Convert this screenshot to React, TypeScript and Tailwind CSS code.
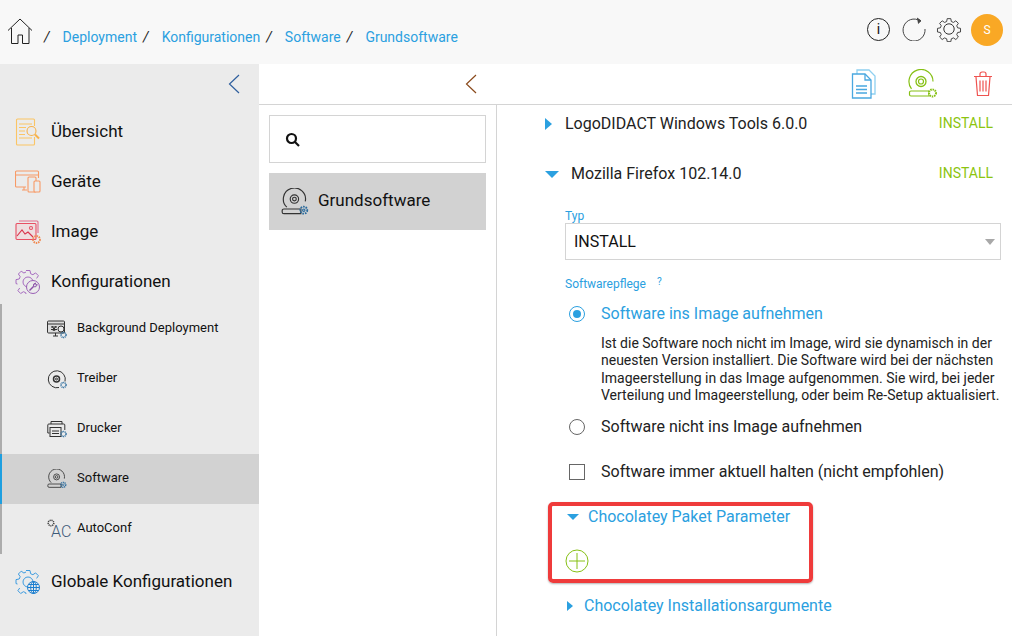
import { ReactNode } from "react";

// small outline drawings, one per menu entry
function Disc({ color = "#333", gear = "#2b6c9e", size = 24 }: { color?: string; gear?: string; size?: number }) {
  return (
    <svg width={size} height={size} viewBox="0 0 24 24" fill="none" stroke={color} strokeWidth="1">
      <path d="M5 16.400A9.500 9.500 0 1 1 20.800 11.500" />
      <circle cx="11.500" cy="9.500" r="3.600" />
      <circle cx="11.500" cy="9.500" r="1.600" />
      <path d="M2.500 18h14.500v4H2.500a1.500 1.500 0 0 1-1.500-1.500v-1A1.500 1.500 0 0 1 2.500 18z" />
      <circle cx="19.500" cy="19" r="3" stroke={gear} strokeWidth="1.600" strokeDasharray="1.400 0.800" />
      <circle cx="19.500" cy="19" r="1" stroke={gear} />
    </svg>
  );
}

function Gear({ color = "#333", size = 26 }: { color?: string; size?: number }) {
  return (
    <svg width={size} height={size} viewBox="0 0 26 26" fill="none" stroke={color} strokeWidth="1">
      <path d="M11 1.500h4l.6 3.200 2.300 1 2.700-1.800 2.800 2.800-1.800 2.700 1 2.300 3.200.6v4l-3.200.6-1 2.300 1.800 2.700-2.800 2.800-2.700-1.800-2.300 1-.6 3.200h-4l-.6-3.200-2.300-1-2.700 1.800-2.800-2.800 1.800-2.700-1-2.300-3.200-.6v-4l3.200-.6 1-2.300-1.800-2.700 2.800-2.800 2.700 1.800 2.300-1z" transform="translate(1.300 1.300) scale(.9)" />
      <circle cx="13" cy="13" r="5.200" />
    </svg>
  );
}

function NavIcon({ name }: { name: string }) {
  if (name === "uebersicht")
    return (
      <svg width="26" height="28" viewBox="0 0 26 28" fill="none" stroke="#fbc565" strokeWidth="1.100">
        <path d="M2.500 1h16a1 1 0 0 1 1 1v6M19.500 19v7a1 1 0 0 1-1 1h-16a1 1 0 0 1-1-1V2a1 1 0 0 1 1-1" />
        <path d="M4 6h13M4 9.500h7M4 13h6M4 16.500h6M4 20h13" />
        <circle cx="16.500" cy="13" r="4.500" stroke="#f6b24c" />
        <path d="M20 16.500l4 4" stroke="#f6b24c" strokeWidth="2" />
      </svg>
    );
  if (name === "geraete")
    return (
      <svg width="26" height="26" viewBox="0 0 26 26" fill="none" stroke="#f79a66" strokeWidth="1.100">
        <path d="M11 18H1.500a1 1 0 0 1-1-1V3a1 1 0 0 1 1-1h21a1 1 0 0 1 1 1v6" />
        <path d="M1 6h23M7 21h5M9 18v3" />
        <rect x="13" y="8" width="8" height="15" rx="1" />
        <rect x="19" y="12" width="6" height="11" rx="1" fill="#ebebeb" />
      </svg>
    );
  if (name === "image")
    return (
      <svg width="27" height="26" viewBox="0 0 27 26" fill="none" stroke="#e84f63" strokeWidth="1.100">
        <path d="M4 2h18a1 1 0 0 1 1 1v11" stroke="#e36a8a" />
        <rect x="1" y="4.500" width="20" height="16" rx="1" fill="#f3c7cb" fillOpacity=".35" />
        <path d="M2 17l5-6 3 4 3-2 5 5" stroke="#d9344c" />
        <circle cx="16" cy="9" r="1.500" />
        <circle cx="21.500" cy="20.500" r="3.500" stroke="#f08a52" strokeWidth="1.800" strokeDasharray="1.500 .8" />
      </svg>
    );
  if (name === "konfig")
    return (
      <svg width="26" height="26" viewBox="0 0 26 26" fill="none" stroke="#a66cc0" strokeWidth="1">
        <path d="M11 1.500h4l.6 3.200 2.300 1 2.700-1.800 2.800 2.800-1.800 2.700M4.700 19l-1.800 2.700 2.800 2.800 2.700-1.800 2.300 1 .3 1.300M2.500 15l-1.500-.4v-4l3.200-.6 1-2.300L3.400 5l2.800-2.800L8.900 4l2.100-1" />
        <circle cx="13" cy="13" r="5" />
        <circle cx="18" cy="18" r="6.500" fill="#ebebeb" stroke="#9a5fb5" />
        <path d="M14.500 21.500l4-4" stroke="#8a4fa8" strokeWidth="1.400" />
        <path d="M20.800 14a2.800 2.800 0 0 0-2.300 3.500 2.800 2.800 0 0 0 3.700-2l-1.700.5-.8-.8z" stroke="#8a4fa8" />
      </svg>
    );
  if (name === "global")
    return (
      <svg width="26" height="26" viewBox="0 0 26 26" fill="none" stroke="#3c9be0" strokeWidth="1">
        <path d="M11 1.500h4l.6 3.200 2.300 1 2.700-1.800 2.800 2.800-1.800 2.700M4.700 19l-1.800 2.700 2.800 2.800 2.700-1.800 2.300 1 .3 1.300M2.500 15l-1.500-.4v-4l3.200-.6 1-2.300L3.400 5l2.800-2.800L8.900 4l2.100-1" />
        <circle cx="13" cy="13" r="5" />
        <circle cx="18.500" cy="18.500" r="6" fill="#ebebeb" stroke="#1c7fd0" />
        <path d="M12.500 18.500h12M18.500 12.500v12M14 15.500h9M14 21.500h9" stroke="#1c7fd0" />
        <ellipse cx="18.500" cy="18.500" rx="2.800" ry="6" stroke="#1c7fd0" />
      </svg>
    );
  if (name === "background")
    return (
      <svg width="20" height="20" viewBox="0 0 20 20" fill="none" stroke="#333" strokeWidth="1">
        <rect x="0.500" y="2" width="17" height="12" rx="1" fill="#ddd" />
        <path d="M1 5h16M6 17h5M8.500 14v3" />
        <path d="M4 8h6M4 10.500h6M5 7l3 5M9 7l-3 5" />
        <circle cx="14" cy="10" r="3" fill="#ebebeb" />
        <circle cx="16.500" cy="16" r="2.500" stroke="#2b6c9e" strokeWidth="1.500" strokeDasharray="1 .6" />
      </svg>
    );
  if (name === "treiber")
    return (
      <svg width="20" height="20" viewBox="0 0 20 20" fill="none" stroke="#333" strokeWidth="1">
        <path d="M12 18.500a8.500 8.500 0 1 1 6-6" />
        <circle cx="9.500" cy="10" r="3" strokeWidth="1.500" />
        <circle cx="9.500" cy="10" r="1" />
        <circle cx="16.500" cy="16" r="2.500" stroke="#2b6c9e" strokeWidth="1.500" strokeDasharray="1 .6" />
      </svg>
    );
  if (name === "drucker")
    return (
      <svg width="20" height="20" viewBox="0 0 20 20" fill="none" stroke="#333" strokeWidth="1">
        <path d="M4 5V2.500h11V5" />
        <path d="M2.500 14H.800V6a1 1 0 0 1 1-1h15a1 1 0 0 1 1 1v5" />
        <rect x="3" y="8.500" width="11" height="9" fill="#ebebeb" />
        <path d="M5 12h7M5 14.500h7" />
        <circle cx="16.500" cy="15" r="2.500" stroke="#2b6c9e" strokeWidth="1.500" strokeDasharray="1 .6" />
      </svg>
    );
  if (name === "software") return <Disc size={20} />;
  return (
    <div className="relative h-5 w-5">
      <span className="absolute left-[4px] top-[5px] text-[16px] leading-none font-light text-[#3d5a78]">AC</span>
      <svg className="absolute left-0 top-0" width="9" height="9" viewBox="0 0 9 9" fill="none">
        <circle cx="4" cy="4" r="2.800" stroke="#444" strokeWidth="1.600" strokeDasharray="1.200 .7" />
      </svg>
    </div>
  );
}

function NavItem({ icon, label }: { icon: string; label: string }) {
  return (
    <div className="flex h-[50px] items-center pl-[15px] pt-[6px]">
      <span className="flex w-[36px] shrink-0">
        <NavIcon name={icon} />
      </span>
      <span className="text-[17px] text-[#111]">{label}</span>
    </div>
  );
}

function SubItem({ icon, label, active }: { icon: string; label: string; active?: boolean }) {
  return (
    <div
      className={`flex h-[50px] items-center border-l-2 pl-[45px] ${
        active ? "border-[#1e9fe0] bg-[#d2d2d2]" : "border-[#acacac]"
      }`}
    >
      <span className="flex w-[30px] shrink-0">
        <NavIcon name={icon} />
      </span>
      <span className="mb-[3px] text-[13px] text-[#111]">{label}</span>
    </div>
  );
}

function Crumb({ children }: { children: ReactNode }) {
  return (
    <span className="flex items-center gap-[13px]">
      <span className="text-[#222] italic">/</span>
      <span className="text-[#2ba0e0]">{children}</span>
    </span>
  );
}

function Radio({ on, label }: { on?: boolean; label: string }) {
  return (
    <div className={`flex items-center gap-[16px] text-[16px] ${on ? "text-[#2ba0e0]" : "text-[#222]"}`}>
      <span
        className={`flex h-4 w-4 items-center justify-center rounded-full border-[1.5px] ${
          on ? "border-[#2ba0e0]" : "border-[#666]"
        }`}
      >
        {on && <span className="h-2 w-2 rounded-full bg-[#2ba0e0]" />}
      </span>
      {label}
    </div>
  );
}

export default function App() {
  return (
    <div className="flex h-[636px] w-[1012px] flex-col overflow-hidden bg-white font-['Roboto',sans-serif]">
      {/* top bar */}
      <header className="flex h-[64px] shrink-0 items-center bg-[#f8f8f8] pl-[7px] pr-[9px]">
        <svg width="26" height="27" viewBox="0 0 26 27" fill="none" stroke="#222" strokeWidth="1" className="mb-[2px]">
          <path d="M1 12.500L13 1l12 11.500M4.500 10v15.500h6.500V17h4.500v8.500h6.500V10" />
        </svg>
        <nav className="ml-[11px] mt-[10px] flex items-center gap-[6px] text-[14px]">
          <Crumb>Deployment</Crumb>
          <Crumb>Konfigurationen</Crumb>
          <Crumb>Software</Crumb>
          <Crumb>Grundsoftware</Crumb>
        </nav>
        <div className="mb-[6px] ml-auto flex items-center">
          <span className="flex h-[23px] w-[23px] items-center justify-center rounded-full border border-[#222] text-[14px] text-[#111]">
            i
          </span>
          <svg className="ml-[12px]" width="24" height="24" viewBox="0 0 24 24" fill="none" stroke="#444" strokeWidth="1">
            <path d="M18 3.800A11 11 0 1 0 23 12" />
            <path d="M15 1l4 2.800-3 2.700" fill="#444" />
          </svg>
          <span className="ml-[10px]">
            <Gear size={26} />
          </span>
          <span className="ml-[9px] mt-[2px] flex h-8 w-8 items-center justify-center rounded-full bg-[#f9a825] text-[12px] text-white">
            S
          </span>
        </div>
      </header>

      <div className="flex min-h-0 flex-1">
        {/* main menu */}
        <aside className="flex w-[259px] shrink-0 flex-col bg-[#ebebeb]">
          <div className="flex h-[40px] items-center justify-end pr-[19px]">
            <svg width="12" height="20" viewBox="0 0 12 20" fill="none" stroke="#2f5f9e" strokeWidth="1.200">
              <path d="M11 1L1.500 10l9.500 9" />
            </svg>
          </div>
          <NavItem icon="uebersicht" label="Übersicht" />
          <NavItem icon="geraete" label="Geräte" />
          <NavItem icon="image" label="Image" />
          <NavItem icon="konfig" label="Konfigurationen" />
          <SubItem icon="background" label="Background Deployment" />
          <SubItem icon="treiber" label="Treiber" />
          <SubItem icon="drucker" label="Drucker" />
          <SubItem icon="software" label="Software" active />
          <SubItem icon="autoconf" label="AutoConf" />
          <NavItem icon="global" label="Globale Konfigurationen" />
        </aside>

        <main className="flex min-w-0 flex-1 flex-col">
          {/* toolbar */}
          <div className="flex h-[41px] shrink-0 items-center border-b border-[#d4d4d4]">
            <svg className="ml-[206px]" width="12" height="20" viewBox="0 0 12 20" fill="none" stroke="#8a4a1c" strokeWidth="1.200">
              <path d="M11 1L1.500 10l9.500 9" />
            </svg>
            <svg className="ml-[374px]" width="26" height="30" viewBox="0 0 26 30" fill="none" stroke="#4aa8e0" strokeWidth="1.300">
              <path d="M6 5V1h12l6 6v18h-4" stroke="#8fd0f0" />
              <path d="M1.500 5H14l6 6v18H1.500z" />
              <path d="M14 5v6h6" />
              <path d="M5 17h11M5 20.500h11M5 24h11" />
            </svg>
            <svg className="ml-[31px]" width="30" height="30" viewBox="0 0 30 30" fill="none" stroke="#86c015" strokeWidth="1.200">
              <path d="M3.500 19.800A12 12 0 1 1 25 12.500" />
              <circle cx="13" cy="12.500" r="5" strokeWidth="1.300" />
              <circle cx="13" cy="12.500" r="2.500" />
              <path d="M3 22h18v5H3a1.500 1.500 0 0 1-1.500-1.500v-2A1.500 1.500 0 0 1 3 22z" />
              <circle cx="24.500" cy="24" r="3.500" strokeWidth="2" strokeDasharray="1.500 .8" fill="#fff" />
            </svg>
            <svg className="ml-[35px]" width="20" height="26" viewBox="0 0 20 26" fill="none" stroke="#ef5350" strokeWidth="1.200">
              <path d="M1 5.500h18M7 5.500V3a2 2 0 0 1 2-2h2a2 2 0 0 1 2 2v2.500" />
              <path d="M3 6l1.500 18.500h11L17 6" />
              <path d="M7 9.500v11M10 9.500v11M13 9.500v11" />
            </svg>
          </div>

          <div className="flex min-h-0 flex-1">
            {/* list column */}
            <div className="flex w-[238px] shrink-0 flex-col gap-[10px] border-r border-[#d4d4d4] px-[10px] pt-[10px]">
              <div className="flex h-[48px] items-center border border-[#d4d4d4] pl-[15px]">
                <svg width="15" height="15" viewBox="0 0 15 15" fill="none" stroke="#111" strokeWidth="2.200">
                  <circle cx="6.500" cy="6.500" r="4.500" />
                  <path d="M10 10l4 4" />
                </svg>
              </div>
              <div className="flex h-[57px] items-center gap-[9px] bg-[#d2d2d2] pl-[12px]">
                <Disc size={28} />
                <span className="mb-[2px] text-[17px] text-[#111]">Grundsoftware</span>
              </div>
            </div>

            {/* detail column */}
            <div className="relative min-w-0 flex-1 pt-[8px] pl-[48px] pr-[11px]">
              <div className="flex h-[22px] items-center">
                <span className="h-0 w-0 border-y-[6px] border-l-[7px] border-y-transparent border-l-[#2ba0e0]" />
                <span className="ml-[13px] text-[16px] text-[#222]">LogoDIDACT Windows Tools 6.0.0</span>
                <span className="mb-[2px] ml-auto mr-[8px] text-[14px] text-[#8cc510]">INSTALL</span>
              </div>
              <div className="mt-[28px] flex h-[22px] items-center">
                <span className="h-0 w-0 border-x-[7px] border-t-[7px] border-x-transparent border-t-[#2ba0e0]" />
                <span className="ml-[12px] text-[16px] text-[#222]">Mozilla Firefox 102.14.0</span>
                <span className="mb-[2px] ml-auto mr-[8px] text-[14px] text-[#8cc510]">INSTALL</span>
              </div>

              <div className="ml-[20px]">
                <div className="mt-[24px] text-[12px] leading-[14px] text-[#2ba0e0]">Typ</div>
                <div className="flex h-[37px] items-center justify-between border border-[#d4d4d4] pl-[8px] pr-[5px] text-[16px] text-[#111]">
                  INSTALL
                  <span className="h-0 w-0 border-x-[5px] border-t-[6px] border-x-transparent border-t-[#a8a8a8]" />
                </div>
                <div className="mt-[17px] flex text-[12px] leading-[14px] text-[#2ba0e0]">
                  Softwarepflege
                  <span className="ml-[11px] text-[10px] leading-[10px]">?</span>
                </div>

                <div className="mt-[11px] ml-[4px]">
                  <Radio on label="Software ins Image aufnehmen" />
                </div>
                <p className="mt-[9px] ml-[36px] w-[410px] text-[14px] leading-[17.3px] text-[#222]">
                  Ist die Software noch nicht im Image, wird sie dynamisch in der neuesten Version installiert. Die
                  Software wird bei der nächsten Imageerstellung in das Image aufgenommen. Sie wird, bei jeder
                  Verteilung und Imageerstellung, oder beim Re-Setup aktualisiert.
                </p>
                <div className="mt-[11px] ml-[4px]">
                  <Radio label="Software nicht ins Image aufnehmen" />
                </div>
                <div className="mt-[21px] ml-[4px] flex items-center gap-[16px] text-[16px] text-[#222]">
                  <span className="h-4 w-4 border-[1.5px] border-[#666]" />
                  Software immer aktuell halten (nicht empfohlen)
                </div>

                <div className="mt-[22px] ml-[2px] flex h-[22px] items-center">
                  <span className="h-0 w-0 border-x-[6px] border-t-[6px] border-x-transparent border-t-[#2ba0e0]" />
                  <span className="ml-[9px] text-[16px] text-[#2ba0e0]">Chocolatey Paket Parameter</span>
                </div>
                <svg className="mt-[21px]" width="24" height="24" viewBox="0 0 24 24" fill="none" stroke="#86c015" strokeWidth="1">
                  <circle cx="12" cy="12" r="11" />
                  <path d="M12 4v16M4 12h16" />
                </svg>
                <div className="mt-[22px] ml-[2px] flex h-[22px] items-center">
                  <span className="h-0 w-0 border-y-[5px] border-l-[6px] border-y-transparent border-l-[#2ba0e0]" />
                  <span className="ml-[11px] text-[16px] text-[#2ba0e0]">Chocolatey Installationsargumente</span>
                </div>
              </div>

              {/* red annotation drawn over the screenshot */}
              <div className="absolute left-[51px] top-[397px] h-[81px] w-[265px] rounded-[5px] border-[4px] border-[#ef3b3b] shadow-[0_1px_2px_rgba(0,0,0,0.3)]" />
            </div>
          </div>
        </main>
      </div>
    </div>
  );
}
